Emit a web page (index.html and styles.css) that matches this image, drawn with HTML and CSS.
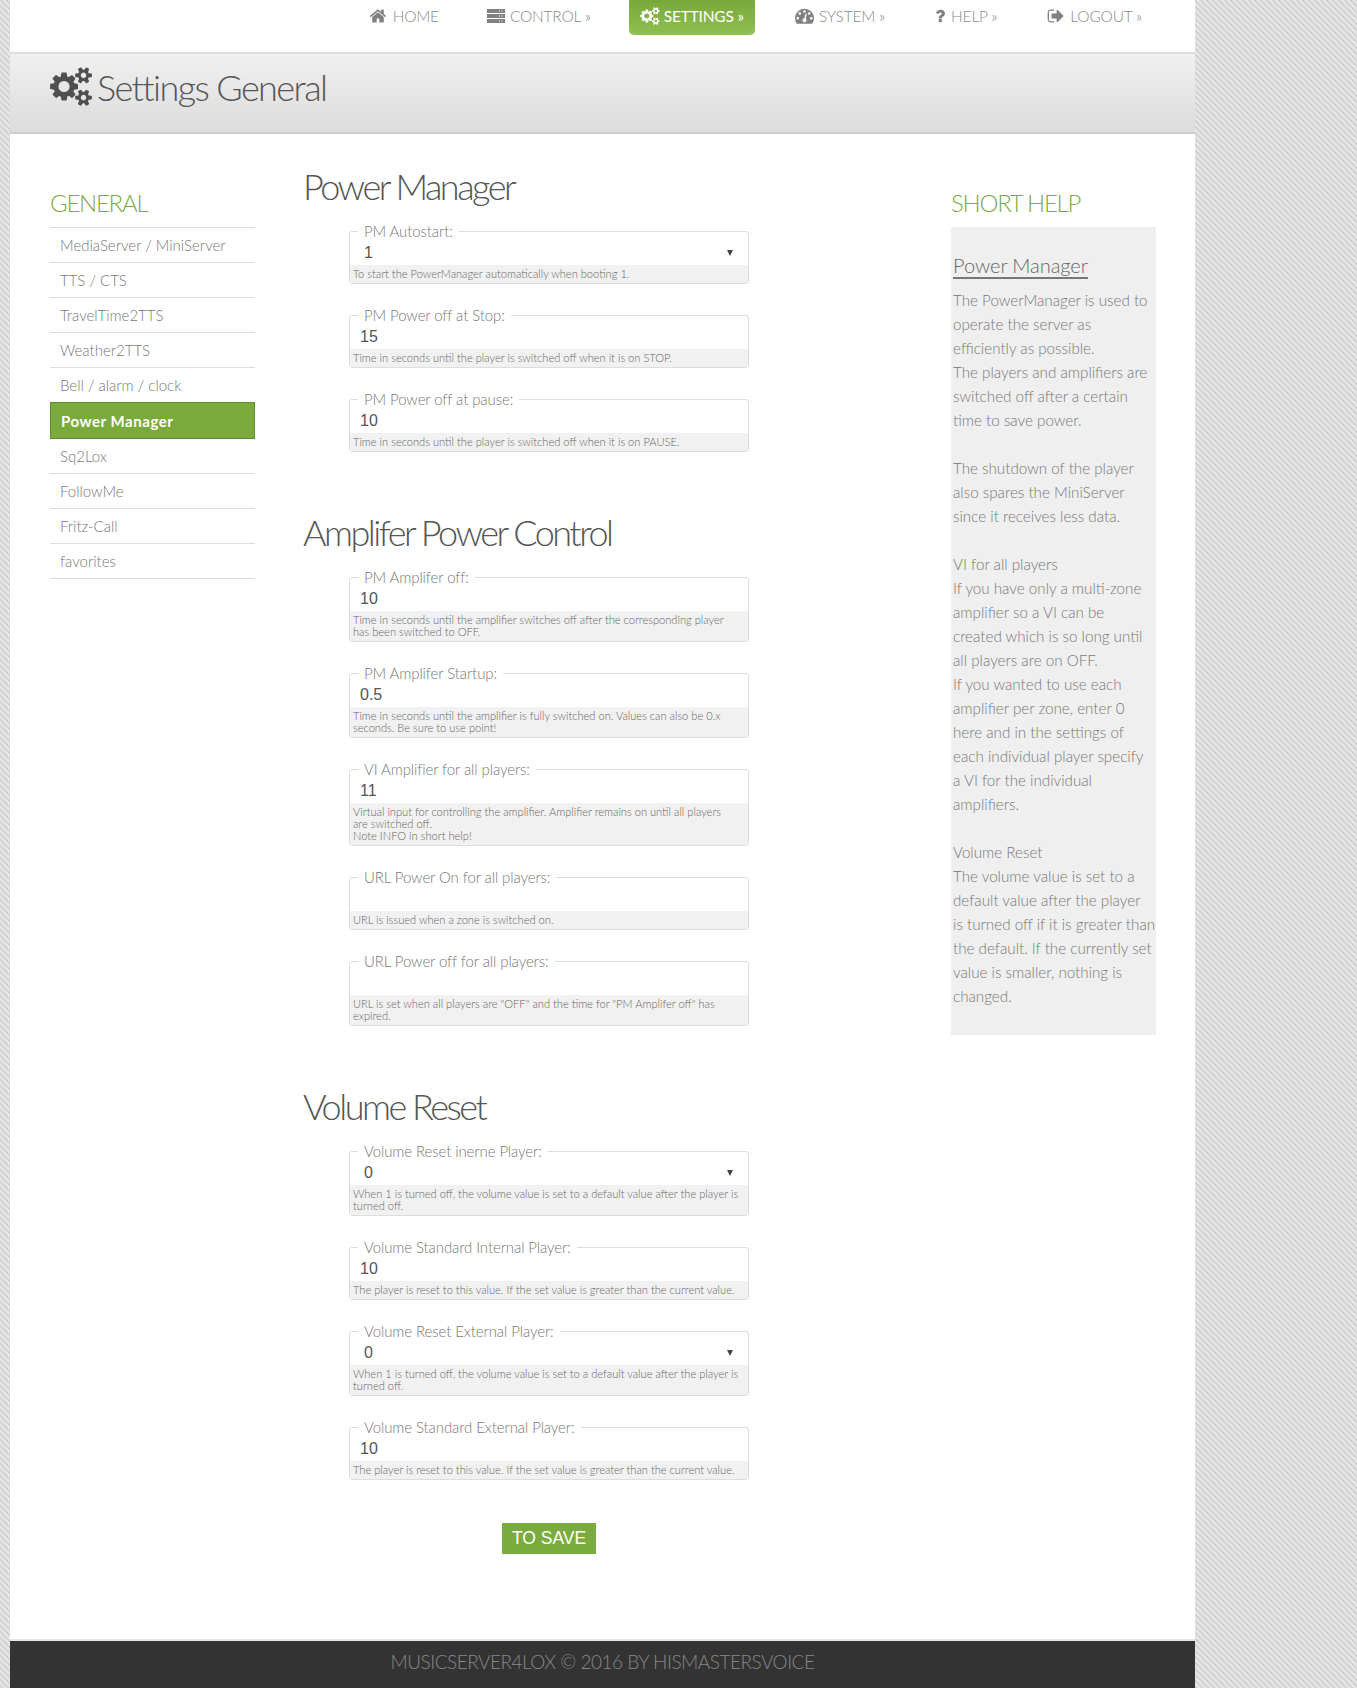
FILE: index.html
```
<!DOCTYPE html>
<html lang="en">
<head>
<meta charset="utf-8">
<title>Settings General</title>
<link rel="stylesheet" href="styles.css">
</head>
<body>
<svg class="defs" width="0" height="0" aria-hidden="true">
<symbol id="i-cogs" viewBox="0 0 1920 1792"><path d="M896 896q0-106-75-181t-181-75-181 75-75 181 75 181 181 75 181-75 75-181zm768 512q0-52-38-90t-90-38-90 38-38 90q0 53 37.500 90.500t90.500 37.500 90.500-37.500 37.500-90.500zm0-1024q0-52-38-90t-90-38-90 38-38 90q0 53 37.500 90.500t90.500 37.500 90.500-37.500 37.500-90.500zm-384 421v185q0 10-7 19.500t-16 10.500l-155 24q-11 35-32 76 34 48 90 115 7 11 7 20 0 12-7 19-23 30-82.500 89.500t-78.500 59.500q-11 0-21-7l-115-90q-37 19-77 31-11 108-23 155-7 24-30 24h-186q-11 0-20-7.500t-10-17.500l-23-153q-34-10-75-31l-118 89q-7 7-20 7-11 0-21-8-144-133-144-160 0-9 7-19 10-14 41-53t47-61q-23-44-35-82l-152-24q-10-1-17-9.500t-7-19.500v-185q0-10 7-19.500t16-10.500l155-24q11-35 32-76-34-48-90-115-7-11-7-20 0-12 7-20 22-30 82-89t79-59q11 0 21 7l115 90q34-18 77-32 11-108 23-154 7-24 30-24h186q11 0 20 7.500t10 17.500l23 153q34 10 75 31l118-89q8-7 20-7 11 0 21 8 144 133 144 160 0 8-7 19-12 16-42 54t-45 60q23 48 34 82l152 23q10 2 17 10.500t7 19.500zm640 533v140q0 16-149 31-12 27-30 52 51 113 51 138 0 4-4 7-122 71-124 71-8 0-46-47t-52-68q-20 2-30 2t-30-2q-14 21-52 68t-46 47q-2 0-124-71-4-3-4-7 0-25 51-138-18-25-30-52-149-15-149-31v-140q0-16 149-31 13-29 30-52-51-113-51-138 0-4 4-7 4-2 35-20t59-34 30-16q8 0 46 46.500t52 67.500q20-2 30-2t30 2q51-71 92-112l6-2q4 0 124 70 4 3 4 7 0 25-51 138 17 23 30 52 149 15 149 31zm0-1024v140q0 16-149 31-12 27-30 52 51 113 51 138 0 4-4 7-122 71-124 71-8 0-46-47t-52-68q-20 2-30 2t-30-2q-14 21-52 68t-46 47q-2 0-124-71-4-3-4-7 0-25 51-138-18-25-30-52-149-15-149-31v-140q0-16 149-31 13-29 30-52-51-113-51-138 0-4 4-7 4-2 35-20t59-34 30-16q8 0 46 46.500t52 67.500q20-2 30-2t30 2q51-71 92-112l6-2q4 0 124 70 4 3 4 7 0 25-51 138 17 23 30 52 149 15 149 31z"/></symbol>
</svg>
<div class="page">
  <nav class="nav">
    <a class="nav-item nav-item-home"><svg class="ico ico-home" viewBox="0 0 1792 1792"><path d="M1472 992v480q0 26-19 45t-45 19h-384v-384h-256v384h-384q-26 0-45-19t-19-45v-480q0-1 .5-3t.5-3l575-474 575 474q1 2 1 6zm223-69l-62 74q-8 9-21 11h-3q-13 0-21-7l-692-577-692 577q-12 8-24 7-13-2-21-11l-62-74q-8-10-7-23.500t11-21.500l719-599q32-26 76-26t76 26l244 204v-195q0-14 9-23t23-9h192q14 0 23 9t9 23v408l219 182q10 8 11 21.500t-7 23.500z"/></svg>HOME</a>
    <a class="nav-item"><svg class="ico ico-server" viewBox="0 0 18 14"><path d="M0 0h18v4H0zM0 5h18v4H0zM0 10h18v4H0z"/><path class="ico-cut" d="M12 1.500h1v1h-1zM14.500 1.500h1v1h-1zM12 6.500h1v1h-1zM14.500 6.500h1v1h-1zM12 11.500h1v1h-1zM14.500 11.500h1v1h-1z"/></svg>CONTROL »</a>
    <a class="nav-item nav-item-active"><svg class="ico ico-cog"><use href="#i-cogs"/></svg>SETTINGS »</a>
    <a class="nav-item"><svg class="ico ico-gauge" viewBox="0 0 1792 1792"><path d="M384 1152q0-53-37.500-90.500t-90.500-37.500-90.500 37.500-37.500 90.500 37.500 90.500 90.500 37.500 90.500-37.500 37.500-90.500zm192-448q0-53-37.500-90.500t-90.500-37.500-90.500 37.500-37.500 90.500 37.500 90.500 90.500 37.500 90.500-37.500 37.500-90.500zm428 481l101-382q6-26-7.500-48.500t-38.500-29.500-48 6.500-30 39.500l-101 382q-60 5-107 43.500t-63 98.500q-20 77 20 146t117 89 146-20 89-117q16-60-6-117t-72-91zm660-33q0-53-37.500-90.500t-90.500-37.500-90.500 37.500-37.500 90.500 37.500 90.500 90.500 37.500 90.500-37.500 37.500-90.500zm-640-640q0-53-37.500-90.500t-90.500-37.500-90.500 37.500-37.500 90.500 37.500 90.500 90.500 37.500 90.500-37.500 37.500-90.500zm448 192q0-53-37.500-90.500t-90.500-37.500-90.500 37.500-37.500 90.500 37.500 90.500 90.500 37.500 90.500-37.500 37.500-90.500zm320 448q0 261-141 483-19 29-54 29h-1402q-35 0-54-29-141-221-141-483 0-182 71-348t191-286 286-191 348-71 348 71 286 191 191 286 71 348z"/></svg>SYSTEM »</a>
    <a class="nav-item"><svg class="ico ico-help" viewBox="384 200 1024 1400"><path d="M1088 1256v240q0 16-12 28t-28 12h-240q-16 0-28-12t-12-28v-240q0-16 12-28t28-12h240q16 0 28 12t12 28zm316-600q0 54-15.500 101t-35 76.500-55 59.500-57.500 43.500-61 35.500q-41 23-68.500 65t-27.500 67q0 17-12 32.500t-28 15.500h-240q-15 0-25.500-18.500t-10.500-37.500v-45q0-83 65-156.500t143-108.500q59-27 84-56t25-76q0-42-46.500-74t-107.500-32q-65 0-108 29-35 25-107 115-13 16-31 16-12 0-25-8l-164-125q-13-10-15.500-25t5.500-28q160-266 464-266 80 0 161 31t146 83 106 127.500 41 158.500z"/></svg>HELP »</a>
    <a class="nav-item"><svg class="ico ico-out" viewBox="0 0 1792 1792"><path d="M704 1440q0 4 1 20t.500 26.500-3 23.500-10 19.500-20.500 6.500h-320q-119 0-203.500-84.500t-84.500-203.500v-704q0-119 84.500-203.500t203.500-84.500h320q13 0 22.500 9.500t9.500 22.500q0 4 1 20t.500 26.500-3 23.500-10 19.500-20.500 6.500h-320q-66 0-113 47t-47 113v704q0 66 47 113t113 47h312l11.500 1 11.500 3 8 5.500 7 9 2 13.500zm928-544q0 26-19 45l-544 544q-19 19-45 19t-45-19-19-45v-288h-448q-26 0-45-19t-19-45v-384q0-26 19-45t45-19h448v-288q0-26 19-45t45-19 45 19l544 544q19 19 19 45z"/></svg>LOGOUT »</a>
  </nav>
  <header class="title-bar">
    <svg class="title-ico"><use href="#i-cogs"/></svg>
    <h1 class="title">Settings General</h1>
  </header>
  <div class="content">
    <aside class="sidebar">
      <h3 class="side-title">GENERAL</h3>
      <ul class="side-list">
        <li class="side-item">MediaServer / MiniServer</li>
        <li class="side-item">TTS / CTS</li>
        <li class="side-item">TravelTime2TTS</li>
        <li class="side-item">Weather2TTS</li>
        <li class="side-item">Bell / alarm / clock</li>
        <li class="side-item side-item-active">Power Manager</li>
        <li class="side-item">Sq2Lox</li>
        <li class="side-item">FollowMe</li>
        <li class="side-item">Fritz-Call</li>
        <li class="side-item">favorites</li>
      </ul>
    </aside>
    <main class="main">
      <h2 class="section-title">Power Manager</h2>
      <div class="form-group">
        <fieldset class="field"><legend class="field-label">PM Autostart:</legend>
          <div class="select-wrap"><select class="field-select"><option>1</option><option>0</option></select></div>
          <div class="hint">To start the PowerManager automatically when booting 1.</div></fieldset>
        <fieldset class="field"><legend class="field-label">PM Power off at Stop:</legend>
          <input class="field-input" type="text" value="15">
          <div class="hint">Time in seconds until the player is switched off when it is on STOP.</div></fieldset>
        <fieldset class="field"><legend class="field-label">PM Power off at pause:</legend>
          <input class="field-input" type="text" value="10">
          <div class="hint">Time in seconds until the player is switched off when it is on PAUSE.</div></fieldset>
      </div>
      <h2 class="section-title section-title-next">Amplifer Power Control</h2>
      <div class="form-group">
        <fieldset class="field"><legend class="field-label">PM Amplifer off:</legend>
          <input class="field-input" type="text" value="10">
          <div class="hint">Time in seconds until the amplifier switches off after the corresponding player<br>has been switched to OFF.</div></fieldset>
        <fieldset class="field"><legend class="field-label">PM Amplifer Startup:</legend>
          <input class="field-input" type="text" value="0.5">
          <div class="hint">Time in seconds until the amplifier is fully switched on. Values can also be 0.x<br>seconds. Be sure to use point!</div></fieldset>
        <fieldset class="field"><legend class="field-label">VI Amplifier for all players:</legend>
          <input class="field-input" type="text" value="11">
          <div class="hint">Virtual input for controlling the amplifier. Amplifier remains on until all players<br>are switched off.<br>Note INFO in short help!</div></fieldset>
        <fieldset class="field"><legend class="field-label">URL Power On for all players:</legend>
          <input class="field-input" type="text" value="">
          <div class="hint">URL is issued when a zone is switched on.</div></fieldset>
        <fieldset class="field"><legend class="field-label">URL Power off for all players:</legend>
          <input class="field-input" type="text" value="">
          <div class="hint">URL is set when all players are "OFF" and the time for "PM Amplifer off" has<br>expired.</div></fieldset>
      </div>
      <h2 class="section-title section-title-next">Volume Reset</h2>
      <div class="form-group">
        <fieldset class="field"><legend class="field-label">Volume Reset inerne Player:</legend>
          <div class="select-wrap"><select class="field-select"><option>0</option><option>1</option></select></div>
          <div class="hint">When 1 is turned off, the volume value is set to a default value after the player is<br>turned off.</div></fieldset>
        <fieldset class="field"><legend class="field-label">Volume Standard Internal Player:</legend>
          <input class="field-input" type="text" value="10">
          <div class="hint">The player is reset to this value. If the set value is greater than the current value.</div></fieldset>
        <fieldset class="field"><legend class="field-label">Volume Reset External Player:</legend>
          <div class="select-wrap"><select class="field-select"><option>0</option><option>1</option></select></div>
          <div class="hint">When 1 is turned off, the volume value is set to a default value after the player is<br>turned off.</div></fieldset>
        <fieldset class="field"><legend class="field-label">Volume Standard External Player:</legend>
          <input class="field-input" type="text" value="10">
          <div class="hint">The player is reset to this value. If the set value is greater than the current value.</div></fieldset>
        <div class="actions"><button class="save" type="button">TO SAVE</button></div>
      </div>
    </main>
    <aside class="help">
      <h3 class="side-title">SHORT HELP</h3>
      <div class="help-box">
        <h4 class="help-heading">Power Manager</h4>
        <p class="help-text">The PowerManager is used to<br>operate the server as<br>efficiently as possible.<br>The players and amplifiers are<br>switched off after a certain<br>time to save power.<br><br>The shutdown of the player<br>also spares the MiniServer<br>since it receives less data.<br><br>VI for all players<br>If you have only a multi-zone<br>amplifier so a VI can be<br>created which is so long until<br>all players are on OFF.<br>If you wanted to use each<br>amplifier per zone, enter 0<br>here and in the settings of<br>each individual player specify<br>a VI for the individual<br>amplifiers.<br><br>Volume Reset<br>The volume value is set to a<br>default value after the player<br>is turned off if it is greater than<br>the default. If the currently set<br>value is smaller, nothing is<br>changed.</p>
      </div>
    </aside>
  </div>
  <footer class="footer">MUSICSERVER4LOX © 2016 BY HISMASTERSVOICE</footer>
</div>
</body>
</html>
```
FILE: styles.css
```
* { box-sizing: border-box; }
html, body { margin: 0; padding: 0; }
body {
  height: 1688px;
  overflow: hidden;
  font-family: "Lato", "Liberation Sans", sans-serif;
  font-weight: 300;
  color: #666;
  background-color: #e2e2e2;
  background-image: linear-gradient(45deg, #cfcfcf 12.5%, #e4e4e4 12.5%, #e4e4e4 50%, #cfcfcf 50%, #cfcfcf 62.5%, #e4e4e4 62.5%);
  background-size: 6px 6px;
}
.defs { position: absolute; }
.page {
  margin-left: 10px;
  width: 1185px;
  height: 1688px;
  background: #fff;
  display: flex;
  flex-direction: column;
}
.nav {
  height: 52px;
  display: flex;
  justify-content: flex-end;
  align-items: flex-start;
  gap: 30px;
  padding-right: 43px;
  flex: none;
}
.nav-item {
  height: 35px;
  padding: 0 10px 4px;
  display: flex;
  align-items: center;
  font-size: 15.5px;
  color: #8a8a8a;
  letter-spacing: -0.2px;
  white-space: nowrap;
}
.nav-item-home { margin-right: -2px; }
.nav-item-active {
  margin-left: -2px;
  padding: 0 11px 4px;
  color: #fff;
  font-weight: 400;
  background: linear-gradient(#78a83a, #90c050);
  border-radius: 0 0 5px 5px;
}
.ico { fill: #808080; flex: none; margin-right: 6px; }
.ico-cut { fill: #fff; }
.ico-home { width: 18px; height: 18px; margin-right: 6px; }
.ico-server { width: 18px; height: 14px; margin-right: 5px; }
.ico-cog { width: 20px; height: 18px; fill: #fff; margin-right: 4px; }
.ico-gauge { width: 19px; height: 19px; margin-right: 5px; }
.ico-help { width: 10px; height: 14px; }
.ico-out { width: 18px; height: 18px; margin-right: 5px; }
.title-bar {
  height: 82px;
  flex: none;
  border-top: 2px solid #ddd;
  border-bottom: 2px solid #ccc;
  background: linear-gradient(#f0f0f0, #dcdcdc);
  display: flex;
  align-items: center;
  padding-left: 40px;
  padding-bottom: 13px;
}
.title-ico { width: 42px; height: 39px; fill: #4f4f4f; margin-right: 5px; flex: none; }
.title {
  margin: 0;
  font-size: 36px;
  font-weight: 300;
  line-height: 44px;
  letter-spacing: -1.6px;
  color: #555;
}
.content { flex: 1; display: flex; padding: 0 0 0 40px; min-height: 0; }
.sidebar { width: 205px; flex: none; padding-top: 54px; }
.side-title {
  margin: 0;
  height: 39px;
  line-height: 30px;
  font-size: 24px;
  font-weight: 300;
  letter-spacing: -1.25px;
  color: #7aab3e;
}
.side-list { list-style: none; margin: 0; padding: 0; border-top: 1px solid #ddd; }
.side-item {
  height: 35px;
  line-height: 34px;
  padding-left: 10px;
  font-size: 15px;
  color: #777;
  border-bottom: 1px solid #ddd;
}
.side-item-active {
  margin-top: -1px;
  height: 37px;
  line-height: 36px;
  padding-left: 10px;
  background: #7aaa3c;
  border: 1px solid #628c30;
  color: #fff;
  font-weight: 700;
  font-size: 15px;
  letter-spacing: 0.55px;
}
.main { width: 517px; flex: none; margin-left: 48px; padding-top: 28px; }
.section-title {
  margin: 0;
  height: 48px;
  font-size: 36px;
  line-height: 48px;
  font-weight: 300;
  letter-spacing: -2.5px;
  color: #555;
}
.section-title-next { margin-top: 56px; }
.form-group { margin-left: 46px; width: 400px; padding-top: 11px; }
.field {
  margin: 0 0 21px;
  padding: 0;
  border: 1px solid #ddd;
  border-radius: 3px;
  min-width: 0;
  width: 400px;
}
.field-label {
  margin-left: 8px;
  padding: 0 6px;
  font-size: 15px;
  line-height: 20px;
  letter-spacing: -0.1px;
  color: #777;
}
.field-input, .field-select {
  display: block;
  width: 100%;
  height: 24px;
  border: 0;
  outline: 0;
  background: #fff;
  font-family: "Liberation Sans", sans-serif;
  font-size: 16px;
  color: #555;
  padding: 0 0 0 10px;
}
.select-wrap { position: relative; }
.field-select { appearance: none; -webkit-appearance: none; padding: 0 0 2px 14px; }
.select-wrap::after {
  content: "";
  position: absolute;
  right: 15px;
  top: 9px;
  border-left: 3px solid transparent;
  border-right: 3px solid transparent;
  border-top: 6px solid #444;
}
.hint {
  padding: 3px 3px;
  background: #f1f1f1;
  font-size: 11.1px;
  line-height: 12px;
  color: #666;
  white-space: nowrap;
}
.actions { display: flex; justify-content: center; padding-top: 22px; }
.save {
  width: 94px;
  height: 31px;
  padding: 0;
  border: 0;
  background: #7aab3e;
  color: #fff;
  font-family: "Liberation Sans", sans-serif;
  font-size: 17.5px;
}
.help { width: 205px; flex: none; margin-left: 131px; padding-top: 54px; }
.help-box {
  height: 808px;
  background: #efefef;
  padding: 26px 0 0 2px;
}
.help-heading {
  display: inline-block;
  margin: 0;
  font-size: 20px;
  font-weight: 300;
  line-height: 24px;
  letter-spacing: -0.05px;
  color: #666;
  border-bottom: 2px solid #777;
}
.help-text {
  margin: 9px 0 0;
  font-size: 15.2px;
  line-height: 24px;
  color: #777;
  white-space: nowrap;
}
.footer {
  height: 49px;
  flex: none;
  border-top: 2px solid #e6e6e6;
  background: #333;
  color: #888;
  font-size: 19px;
  line-height: 42px;
  text-align: center;
  letter-spacing: -0.5px;
}
```
